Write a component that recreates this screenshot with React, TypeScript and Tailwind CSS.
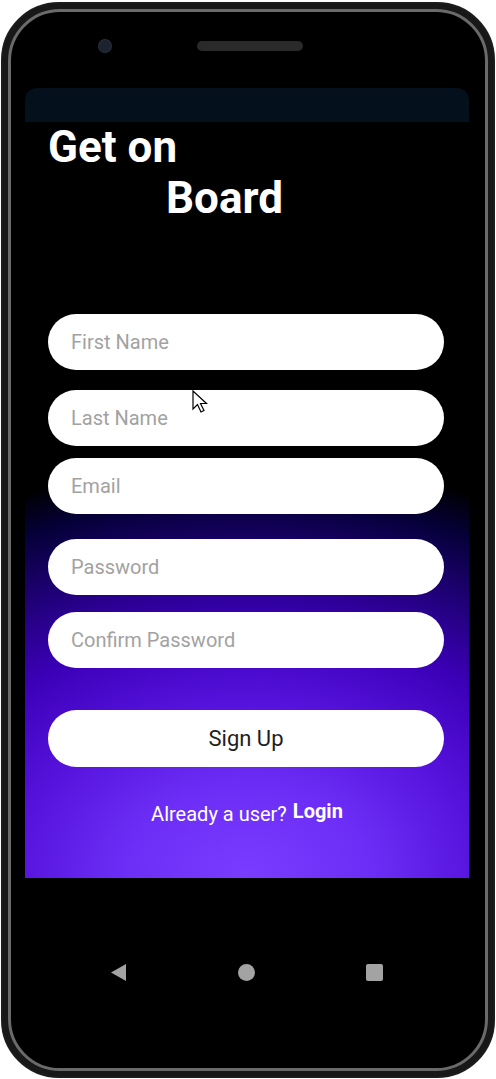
import type { ReactNode } from "react";

const fields = ["First Name", "Last Name", "Email", "Password", "Confirm Password"];
// top margin before each field, taken from the layout
const gaps = ["mt-[90px]", "mt-[20px]", "mt-[12px]", "mt-[25px]", "mt-[17px]"];

function Field({ label, className }: { label: string; className: string }) {
  return (
    <div
      className={`${className} mx-[23px] flex h-[56px] w-[396px] items-center rounded-full bg-white px-[23px] text-[20px] text-[#a2a2a2]`}
    >
      {label}
    </div>
  );
}

function NavBar({ children }: { children: ReactNode }) {
  return <div className="flex h-[183px] items-center justify-center pr-[3px] pt-[6px]">{children}</div>;
}

export default function App() {
  return (
    <div className="relative h-[1079px] w-[496px] bg-white font-['Roboto',sans-serif]">
      <div className="ml-px mt-[2px] h-[1076px] w-[494px] rounded-[58px] border-[2px] border-[#1c1c1c] bg-[#181818] p-[5px]">
        <div className="h-full w-full rounded-[52px] border-[3px] border-[#6a6a6a] bg-black">
          {/* camera + speaker */}
          <div className="flex h-[76px] items-center pb-[8px]">
            <div className="ml-[88px] h-[12px] w-[12px] rounded-full bg-[#1c2230] ring-1 ring-[#2a2f3a]" />
            <div className="ml-[86px] h-[10px] w-[106px] rounded-full bg-[#2a2a2a]" />
          </div>

          {/* app screen */}
          <div className="ml-[14px] h-[790px] w-[444px] overflow-hidden rounded-t-[12px] bg-[radial-gradient(ellipse_560px_420px_at_50%_100%,#7a3cff_0%,#6c2ef6_22%,#5512dc_42%,#3c00b8_60%,#200078_76%,#06003a_90%,#000000_100%)]">
            <div className="h-[34px] bg-[#04111c]" />
            <div className="pl-[23px] text-[44px] font-bold leading-[51px] text-white">
              <div>Get on</div>
              <div className="pl-[118px]">Board</div>
            </div>

            {fields.map((f, i) => (
              <Field key={f} label={f} className={gaps[i]} />
            ))}

            <div className="mx-[23px] mt-[42px] flex h-[57px] w-[396px] items-center justify-center rounded-full bg-white text-[22px] text-[#1e1e1e]">
              Sign Up
            </div>

            <div className="mt-[29px] flex items-end justify-center text-[20px] text-white">
              <span>Already a user?</span>
              <span className="mb-[3px] ml-[6px] font-bold">Login</span>
            </div>
          </div>

          <NavBar>
            <div className="flex w-[273px] items-center justify-between">
              <svg width="17" height="19" viewBox="0 0 17 19">
                <path d="M16 1 L1 9.5 L16 18 Z" fill="#a3a3a3" />
              </svg>
              <div className="h-[17px] w-[17px] rounded-full bg-[#a3a3a3]" />
              <div className="h-[17px] w-[17px] rounded-[2px] bg-[#a3a3a3]" />
            </div>
          </NavBar>
        </div>
      </div>

      {/* mouse pointer */}
      <svg className="absolute left-[192px] top-[388px]" width="18" height="26" viewBox="0 0 18 26">
        <path d="M1 1 L1 19 L5.5 14.5 L9 22 L12 20.5 L8.5 13.5 L14.5 13.5 Z" fill="#fff" stroke="#000" strokeWidth="1.2" />
      </svg>
    </div>
  );
}
